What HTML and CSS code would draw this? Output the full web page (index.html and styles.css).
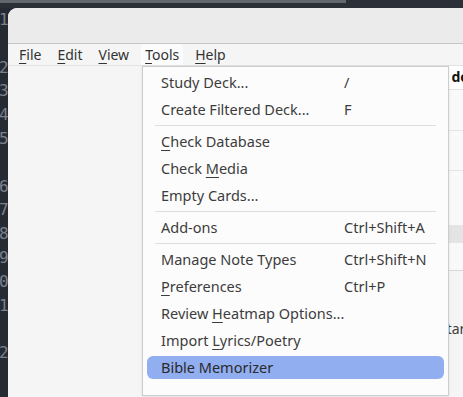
FILE: index.html
```html
<!DOCTYPE html>
<html lang="en">
<head>
    <meta charset="UTF-8">
    <title>Anki - Tools menu</title>
    <link rel="stylesheet" href="styles.css">
</head>
<body>
    <!-- editor tab strip behind the window -->
    <div class="topbar"><div class="tab"></div></div>
    <div class="desk">
        <!-- line numbers of the editor, mostly covered -->
        <div class="gutter">
            <div>1</div><div></div><div>2</div><div>3</div><div>4</div><div>5</div><div></div>
            <div>6</div><div>7</div><div>8</div><div>9</div><div>0</div><div>1</div><div></div><div>2</div>
        </div>
        <div class="window">
            <div class="titlebar"></div>
            <nav class="menubar">
                <span class="menu"><u>F</u>ile</span>
                <span class="menu"><u>E</u>dit</span>
                <span class="menu"><u>V</u>iew</span>
                <span class="menu open"><u>T</u>ools</span>
                <span class="menu"><u>H</u>elp</span>
            </nav>
            <main class="content">
                <section class="decks">
                    <div class="decks_head"><span class="col_todo">To do</span></div>
                    <div class="decks_row first"></div>
                    <div class="decks_row"></div>
                    <div class="decks_row tall"></div>
                    <div class="decks_row current"></div>
                    <div class="decks_row last"></div>
                </section>
                <p class="hint">Start</p>
            </main>

            <!-- the open Tools menu -->
            <div class="popup">
                <div class="item"><span>Study Deck...</span><span>/</span></div>
                <div class="item"><span>Create Filtered Deck...</span><span>F</span></div>
                <div class="sep"></div>
                <div class="item"><span><u>C</u>heck Database</span><span></span></div>
                <div class="item"><span>Check <u>M</u>edia</span><span></span></div>
                <div class="item"><span>Empty Cards...</span><span></span></div>
                <div class="sep"></div>
                <div class="item"><span>Add-ons</span><span>Ctrl+Shift+A</span></div>
                <div class="sep"></div>
                <div class="item"><span>Manage Note Types</span><span>Ctrl+Shift+N</span></div>
                <div class="item"><span><u>P</u>references</span><span>Ctrl+P</span></div>
                <div class="item"><span>Review <u>H</u>eatmap Options...</span><span></span></div>
                <div class="item"><span>Import <u>L</u>yrics/Poetry</span><span></span></div>
                <div class="item hover"><span>Bible Memorizer</span><span></span></div>
            </div>
        </div>
    </div>
</body>
</html>
```

FILE: styles.css
```css
body{
    margin: 0;
    width: 463px;
    height: 397px;
    overflow: hidden;
    background-color: #262b33;
    font-family: "Noto Sans", "Open Sans", sans-serif;
    font-size: 14px;
    color: #3c3c3c;
}
u{
    text-decoration-thickness: 1px;
    text-underline-offset: 3px;
}
.topbar{
    height: 8px;
    background-color: #2b3038;
}
.tab{
    width: 346px;
    height: 3px;
    background-color: #62666d;
}
.desk{
    display: flex;
    height: 389px;
}
.gutter{
    width: 8px;
    flex: none;
    overflow: hidden;
    font-family: "DejaVu Sans Mono", monospace;
    font-size: 16px;
    line-height: 23.8px;
    color: #7a818b;
}
.gutter div{
    height: 23.8px;
    margin-left: -1px;
}
.window{
    position: relative;
    flex: 1;
    display: flex;
    flex-direction: column;
    background-color: #f5f5f5;
    border-top-left-radius: 9px;
    overflow: hidden;
}
.titlebar{
    height: 35px;
    flex: none;
    background-color: #ebebeb;
    border-bottom: 1px solid #c6c6c6;
}
.menubar{
    display: flex;
    height: 21px;
    flex: none;
    padding-left: 7px;
    gap: 8px;
    background-color: #f5f5f5;
    border-bottom: 1px solid #e2e2e2;
    color: #333;
}
.menu{
    padding: 1px 4px 0;
    line-height: 20px;
}
.menu.open{
    background-color: #fcfcfc;
    border-radius: 4px 4px 0 0;
}
.content{
    flex: 1;
}
.decks{
    margin-left: 142px;
    background-color: #f9f9f9;
    border-bottom: 1px solid #d9d9d9;
}
.decks_head{
    height: 23px;
    background-color: #fff;
    border-bottom: 1px solid #e3e3e3;
    font-weight: bold;
    color: #111;
    line-height: 22px;
    white-space: nowrap;
}
.col_todo{
    margin-left: 282px;
}
.decks_row{
    height: 39px;
    border-bottom: 1px solid #e6e6e6;
}
.decks_row.first{
    height: 40px;
}
.decks_row.tall{
    height: 54px;
    border-bottom: 0;
}
.decks_row.current{
    height: 18px;
    border-bottom: 0;
    background-color: #e4e4e4;
}
.decks_row.last{
    height: 27px;
    border-bottom: 0;
}
.hint{
    margin: 48px 0 0 431px;
    white-space: nowrap;
}
.popup{
    position: absolute;
    left: 134px;
    top: 58px;
    width: 305px;
    height: 320px;
    display: flex;
    flex-direction: column;
    padding: 2px 0 6px;
    box-sizing: content-box;
    background-color: #fcfcfc;
    border: 1px solid #cdcdcd;
    box-shadow: 0 1px 3px rgba(0, 0, 0, 0.08);
    font-size: 14.5px;
}
.item{
    display: grid;
    grid-template-columns: 183px 1fr;
    height: 23px;
    flex: none;
    margin: 2px 4px;
    padding-left: 14px;
    border-radius: 6px;
    line-height: 23px;
    white-space: nowrap;
}
.item.hover{
    background-color: #90aef0;
    color: #2a2a2a;
}
.sep{
    height: 1px;
    flex: none;
    margin: 2px 12px;
    background-color: #dedede;
}
```
